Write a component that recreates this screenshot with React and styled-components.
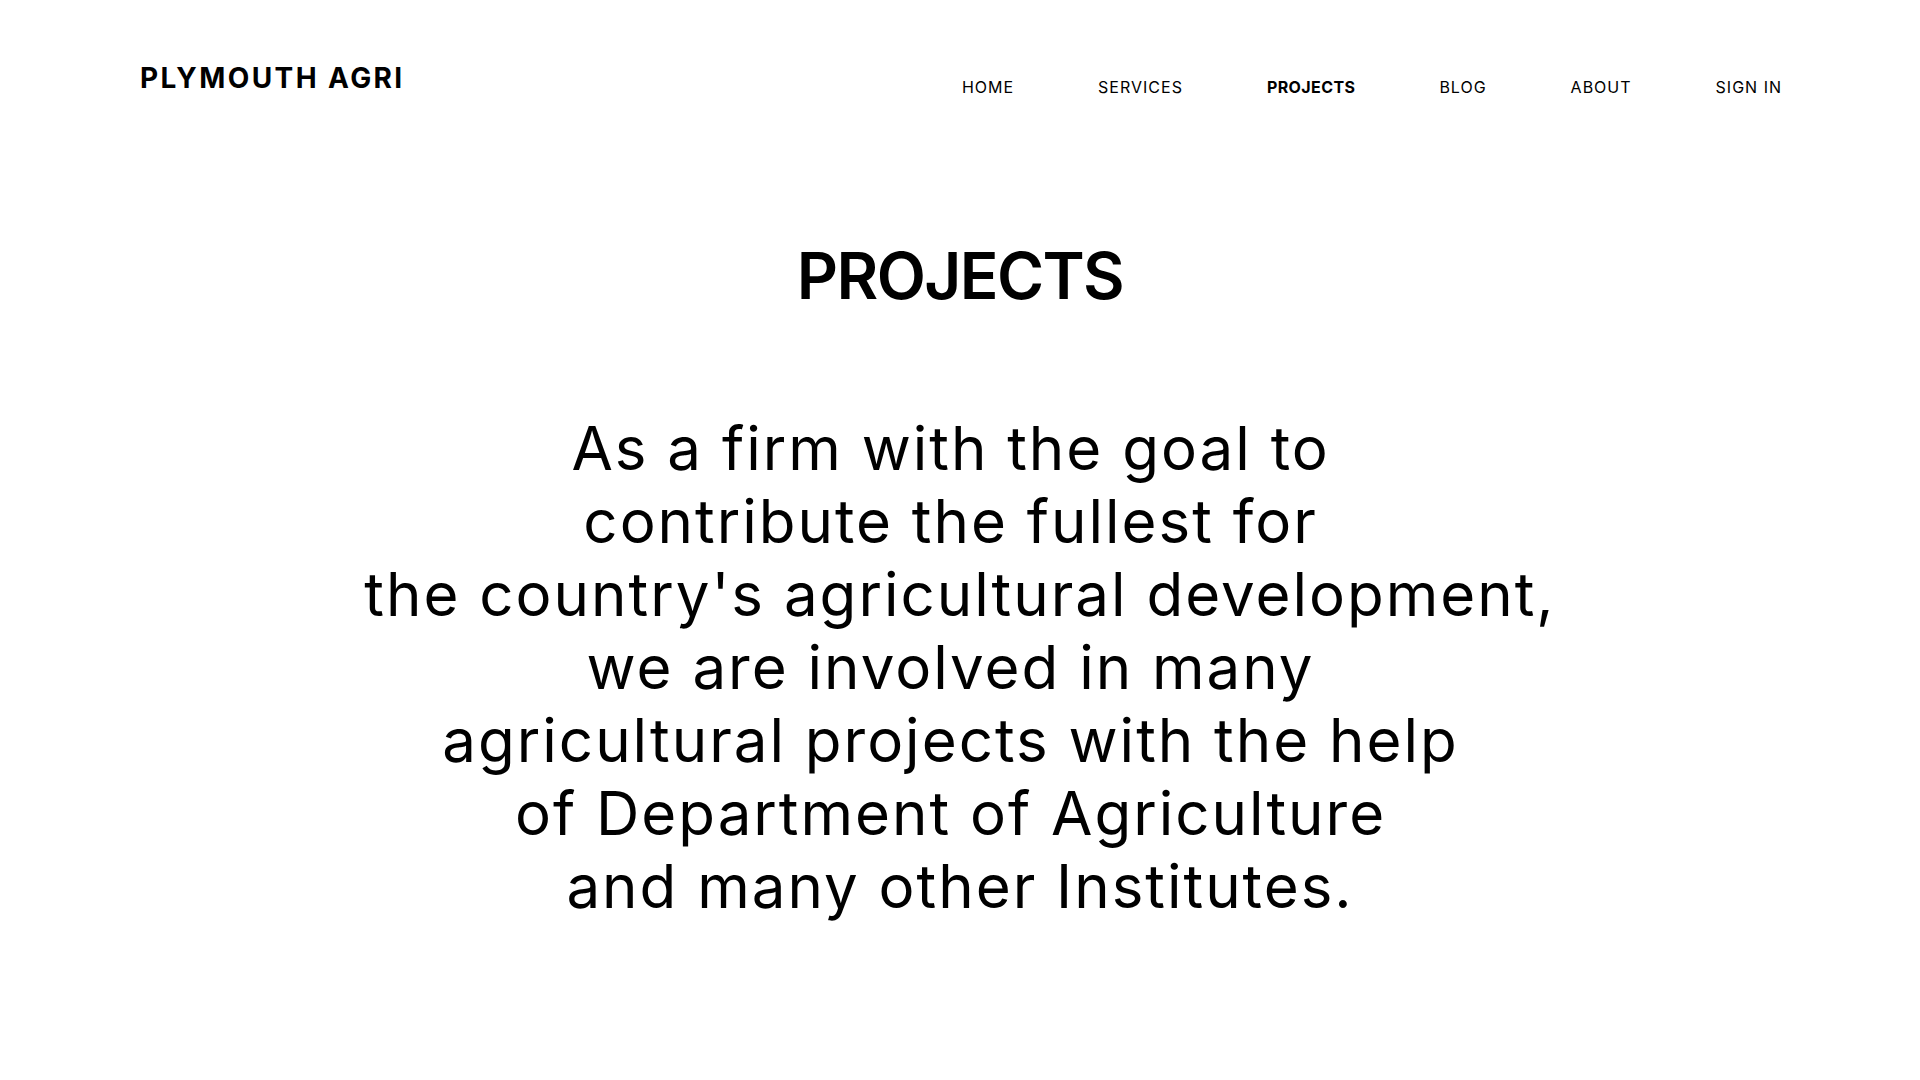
import React from "react";
import styled, { createGlobalStyle } from "styled-components";

const GlobalStyle = createGlobalStyle`
  * { box-sizing: border-box; }
  body {
    margin: 0;
    background: #ffffff;
    color: #000000;
    font-family: Inter, "Open Sans", sans-serif;
  }
`;

const Page = styled.div`
  min-height: 1080px;
  background: #fff;
`;

const Header = styled.header`
  display: flex;
  justify-content: space-between;
  align-items: flex-start;
  padding: 61px 138px 0 140px;
`;

const Logo = styled.div`
  font-size: 28px;
  font-weight: 700;
  letter-spacing: 2.4px;
  line-height: normal;
`;

const Nav = styled.nav`
  display: flex;
  gap: 84px;
  margin-top: 16px;
`;

const NavItem = styled.a`
  font-size: 16px;
  font-weight: ${(p) => (p.$active ? 700 : 400)};
  letter-spacing: ${(p) => (p.$active ? "0.4px" : "1px")};
  line-height: normal;
  color: #000;
  text-decoration: none;
  cursor: pointer;
`;

const Main = styled.main`
  display: flex;
  flex-direction: column;
  align-items: center;
  padding-top: 140px;
`;

const Title = styled.h1`
  margin: 0;
  font-size: 64px;
  font-weight: 600;
  line-height: normal;
  letter-spacing: -1.6px;
`;

const Intro = styled.p`
  margin: 98px 0 0;
  font-size: 60px;
  font-weight: 400;
  line-height: 73px;
  letter-spacing: 2px;
  text-align: center;
`;

const links = ["HOME", "SERVICES", "PROJECTS", "BLOG", "ABOUT", "SIGN IN"];

const lines = [
  "As a firm with the goal to\u00a0",
  "contribute the fullest for\u00a0",
  "the country's agricultural development,",
  "we are involved in many\u00a0",
  "agricultural projects with the help\u00a0",
  "of Department of Agriculture\u00a0",
  "and many other Institutes.",
];

export default function App() {
  return (
    <Page>
      <GlobalStyle />
      <Header>
        <Logo>PLYMOUTH AGRI</Logo>
        <Nav>
          {links.map((l) => (
            <NavItem key={l} $active={l === "PROJECTS"}>
              {l}
            </NavItem>
          ))}
        </Nav>
      </Header>
      <Main>
        <Title>PROJECTS</Title>
        <Intro>
          {lines.map((l, i) => (
            <React.Fragment key={i}>
              {l}
              {i < lines.length - 1 && <br />}
            </React.Fragment>
          ))}
        </Intro>
      </Main>
    </Page>
  );
}
